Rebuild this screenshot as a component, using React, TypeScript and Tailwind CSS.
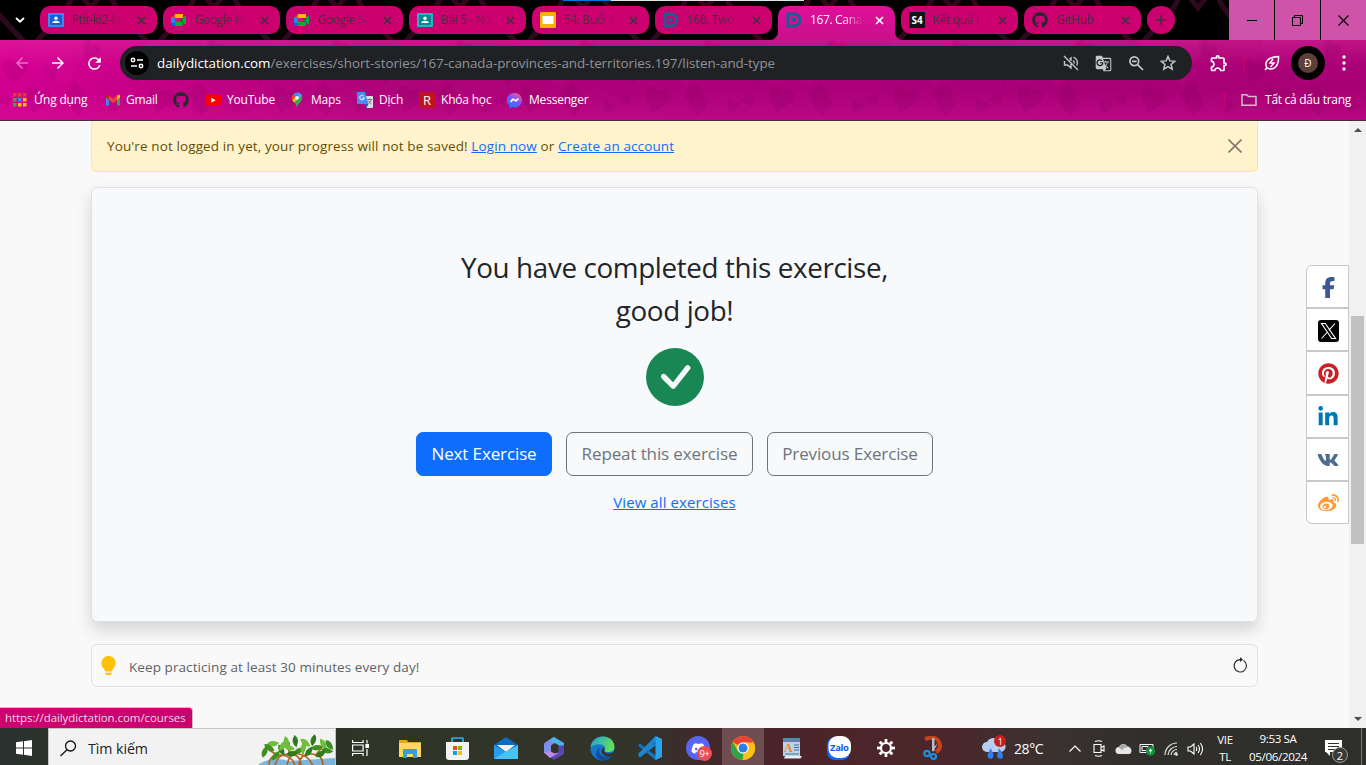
import React from "react";
import { FaGithub, FaFacebookF, FaPinterest, FaLinkedinIn, FaWeibo, FaDiscord } from "react-icons/fa6";
import { FaVk } from "react-icons/fa";
import { BsCheckCircleFill, BsLightbulbFill } from "react-icons/bs";
import { MdOutlineExtension, MdGTranslate, MdArrowBack, MdArrowForward, MdRefresh } from "react-icons/md";

const HEART = "M0 10 C-4 4 -12 -1 -12 -7 C-12 -14 -3 -15 0 -9 C3 -15 12 -14 12 -7 C12 -1 4 4 0 10 Z";

/* ---------- small drawings ---------- */

const CloseX = ({ className = "" }: { className?: string }) => (
  <svg width="9" height="9" viewBox="0 0 9 9" className={className}>
    <path d="M1 1l7 7M8 1L1 8" stroke="currentColor" strokeWidth="1.7" fill="none" />
  </svg>
);

const Classroom = ({ a, b }: { a: string; b: string }) => (
  <svg width="16" height="16" viewBox="0 0 16 16">
    <rect x="0" y="1" width="16" height="14" rx="1" fill={a} />
    <rect x="2" y="3" width="12" height="10" fill={b} />
    <circle cx="8" cy="6.3" r="1.7" fill="#fff" />
    <path d="M4.300 11c0-3 7.400-3 7.400 0z" fill="#fff" />
  </svg>
);

const Meet = () => (
  <svg width="16" height="16" viewBox="0 0 16 16">
    <path d="M4 2h8v4H4z" fill="#ffba00" />
    <path d="M4 2v4H0z" fill="#ea4335" />
    <path d="M0 6h4v5H0z" fill="#2684fc" />
    <path d="M0 11h4v3H1.200q-1.200 0-1.200-1.200z" fill="#0066da" />
    <path d="M4 10h8v2.800q0 1.200-1.200 1.200H4z" fill="#00ac47" />
    <path d="M9 8l3-2.500V12z" fill="#00832d" />
    <path d="M12 5.500L15 3v10l-3-2.500z" fill="#00ac47" />
    <path d="M4 6h5v4H4z" fill="#d8107a" />
  </svg>
);

const Slides = () => (
  <svg width="16" height="16" viewBox="0 0 16 16">
    <rect width="16" height="16" rx="1.500" fill="#f4b400" />
    <rect x="2.500" y="4" width="11" height="8" fill="#fff" />
  </svg>
);

const DLogo = () => (
  <svg width="16" height="16" viewBox="0 0 16 16">
    <path d="M2 2h6a6 6 0 010 12H2z" fill="none" stroke="#1d5c93" strokeWidth="3" />
    <path d="M6 6.500h2a1.500 1.500 0 010 3H6z" fill="#1d5c93" stroke="#1d5c93" />
  </svg>
);

const S4 = () => (
  <span className="flex h-4 w-4 items-center justify-center bg-[#101418] text-[10px] leading-none font-bold text-white">S4</span>
);

const Gmail = () => (
  <svg width="16" height="16" viewBox="0 0 16 16">
    <path d="M1 4v9.500h3V7.500z" fill="#4285f4" />
    <path d="M15 4v9.500h-3V7.500z" fill="#34a853" />
    <path d="M12 3.600l3-1.200V5.500l-3 2.500z" fill="#fbbc04" />
    <path d="M4 3.600L1 2.400V5.500l3 2.500z" fill="#c5221f" />
    <path d="M4 3.600L8 6.800l4-3.200V8l-4 3-4-3z" fill="#ea4335" />
  </svg>
);

const AppsGrid = () => (
  <svg width="14" height="14" viewBox="0 0 14 14">
    {["#e53935", "#e53935", "#e53935", "#43a047", "#4285f4", "#fbbc04", "#43a047", "#fbbc04", "#fbbc04"].map((c, i) => (
      <rect key={i} x={(i % 3) * 5} y={Math.floor(i / 3) * 5} width="3.500" height="3.500" fill={c} />
    ))}
  </svg>
);

const YouTube = () => (
  <svg width="16" height="16" viewBox="0 0 16 16">
    <rect x="0" y="2.500" width="16" height="11.500" rx="3" fill="#f00" />
    <path d="M6.300 5.800v5l4.300-2.500z" fill="#fff" />
  </svg>
);

const MapsPin = () => (
  <svg width="16" height="16" viewBox="0 0 16 16">
    <path d="M8 .5a5.300 5.300 0 015.300 5.300c0 3.700-4 5-5.300 9.700-.8-3-2-4-3.400-5.700l4-4.800z" fill="#34a853" />
    <path d="M4 2.500A5.300 5.300 0 018 .5c1 0 1.800.2 2.500.6L6.300 6z" fill="#4285f4" />
    <path d="M4 2.400L6.300 4.300 3.300 8.200A5.300 5.300 0 014 2.400z" fill="#ea4335" />
    <path d="M3.300 8.200L6.400 4.500 8 7.500l-3 3z" fill="#fbbc04" />
    <path d="M10.500 1.100a5.300 5.300 0 012.300 2.500L10 6.500 8 4z" fill="#4aa0f5" />
    <circle cx="8" cy="5.800" r="1.900" fill="#fff" />
  </svg>
);

const Translate = () => (
  <svg width="16" height="16" viewBox="0 0 16 16">
    <path d="M6 4h9q1 0 1 1v10q0 1-1 1H9.500z" fill="#dcdfe3" />
    <path d="M1 0h7l3.500 12H1q-1 0-1-1V1q0-1 1-1z" fill="#4a8af4" />
    <path d="M7.500 12h4L9.500 16z" fill="#2a56c6" />
    <path d="M7 4.300A2.300 2.300 0 107.300 6H5.200" stroke="#fff" fill="none" />
    <path d="M10.500 7.500h4.500M12.800 6.500v1M14.300 7.500q-.8 3-3 4M11.500 8.500q1 2.500 3 3.500" stroke="#5f6368" strokeWidth=".8" fill="none" />
  </svg>
);

const Messenger = () => (
  <svg width="15" height="15" viewBox="0 0 16 16">
    <defs>
      <linearGradient id="msg" x1="0.200" y1="1" x2="0.900" y2="0">
        <stop offset="0" stopColor="#0a84ff" />
        <stop offset=".55" stopColor="#8a4dff" />
        <stop offset="1" stopColor="#ff5f72" />
      </linearGradient>
    </defs>
    <path d="M8 0a7.600 7.600 0 018 7.700 7.600 7.600 0 01-10 7.300L3 16l-.3-2.500A7.600 7.600 0 018 0z" fill="url(#msg)" />
    <path d="M3.800 9.500L6.500 6.500l3 2 2.700-2.600" stroke="#fff" strokeWidth="1.800" fill="none" />
  </svg>
);

const Chrome = () => (
  <svg width="24" height="24" viewBox="0 0 24 24">
    <circle cx="12" cy="12" r="12" fill="#fbbc04" />
    <path d="M12 12L1.600 6A12 12 0 0122.400 6z" fill="#ea4335" />
    <path d="M1.600 6l5.300 9 5.500 2.700L11.500 24A12 12 0 011.600 6z" fill="#2fa24c" />
    <path d="M12 6.500h10.700a12 12 0 01-11 17.500L17 15z" fill="#fbc116" />
    <circle cx="12" cy="12" r="5.700" fill="#fff" />
    <circle cx="12" cy="12" r="4.500" fill="#2b7de9" />
  </svg>
);

/* ---------- browser header ---------- */

type TabInfo = { icon: React.ReactNode; title: string; active?: boolean };

const TABS: TabInfo[] = [
  { icon: <Classroom a="#4285f4" b="#1a5fd0" />, title: "Ptit-ki2-lo" },
  { icon: <Meet />, title: "Google M" },
  { icon: <Meet />, title: "Google M" },
  { icon: <Classroom a="#1fb5c4" b="#0b8794" />, title: "Bài 5 - Nộ" },
  { icon: <Slides />, title: "54. Buổi 5" },
  { icon: <DLogo />, title: "168. Two" },
  { icon: <DLogo />, title: "167. Cana", active: true },
  { icon: <S4 />, title: "Kết quả ti" },
  { icon: <FaGithub size={16} className="text-[#24292f]" />, title: "GitHub" },
];

const Tab = ({ icon, title, active }: TabInfo) => (
  <div
    className={
      active
        ? "relative mr-1.5 flex h-[34px] w-[117px] shrink-0 items-start rounded-t-[10px] bg-linear-to-b from-[#e0109b] to-[#c80f8a] pt-1.5 pl-2"
        : "relative mr-1.5 flex h-7 w-[117px] shrink-0 items-start rounded-[10px] bg-[#cd0070] pt-1.5 pl-2"
    }
  >
    {active && (
      <>
        <svg className="absolute bottom-0 -left-2" width="8" height="8"><path d="M8 0v8H0A8 8 0 008 0z" fill="#c80f8a" /></svg>
        <svg className="absolute -right-2 bottom-0" width="8" height="8"><path d="M0 0v8h8A8 8 0 010 0z" fill="#c80f8a" /></svg>
      </>
    )}
    <span className="h-4 w-4 shrink-0">{icon}</span>
    <span
      className={
        "ml-2 w-[55px] text-[12px] leading-4 tracking-[-0.350px] whitespace-nowrap " +
        (title === "GitHub" ? "" : "[mask-image:linear-gradient(to_right,black_60%,transparent_96%)] ") +
        (active ? "text-white" : "text-[#40323c]")
      }
    >
      {title}
    </span>
    <CloseX className={active ? "mt-[4px] ml-[10px] text-white" : "mt-[4px] ml-[10px] text-[#40323c]"} />
  </div>
);

const HeartOutlines = () => (
  <svg className="absolute inset-0" width="1366" height="40">
    <g fill="none" stroke="#2c0a1e" strokeWidth="1.500">
      {Array.from({ length: 11 }, (_, i) => (
        <g key={i}>
          <path d={HEART} transform={`translate(${91 + i * 123} -26) scale(3.400)`} />
          <path d={HEART} transform={`translate(${30 + i * 123} 14) scale(3.600)`} />
        </g>
      ))}
    </g>
  </svg>
);

const ToolbarHearts = () => (
  <svg className="absolute inset-0" width="1366" height="80">
    <g fill="#5a0048" fillOpacity=".1">
      {Array.from({ length: 12 }, (_, i) => {
        const x = i * 124;
        return (
          <g key={i}>
            <path d={HEART} transform={`translate(${x + 90} 12) rotate(20) scale(.8)`} />
            <path d={HEART} transform={`translate(${x + 52} 34) rotate(-15) scale(.6)`} />
            <path d={HEART} transform={`translate(${x + 14} 34) rotate(12) scale(1)`} />
            <path d={HEART} transform={`translate(${x + 6} 62) rotate(-20) scale(.5)`} />
            <path d={HEART} transform={`translate(${x + 36} 62) rotate(15) scale(1.100)`} />
            <path d={HEART} transform={`translate(${x + 75} 50) rotate(180) scale(.8)`} />
            <path d={HEART} transform={`translate(${x + 78} 68) scale(.8)`} />
            <path d={HEART} transform={`translate(${x + 112} 68) rotate(25) scale(.6)`} />
          </g>
        );
      })}
    </g>
    <g fill="#ff40c0" fillOpacity=".05">
      {Array.from({ length: 12 }, (_, i) => (
        <path key={i} d={HEART} transform={`translate(${60 + i * 124} 20) rotate(-15) scale(2.800)`} />
      ))}
    </g>
  </svg>
);

const BOOKMARKS: { icon: React.ReactNode; label: string; cls: string }[] = [
  { icon: <AppsGrid />, label: "Ứng dụng", cls: "w-[93px] gap-[7px] pl-[1px]" },
  { icon: <Gmail />, label: "Gmail", cls: "w-[68px] gap-[5px]" },
  { icon: <FaGithub size={16} className="text-[#24292f]" />, label: "", cls: "w-[32px]" },
  { icon: <YouTube />, label: "YouTube", cls: "w-[84px] gap-1.5" },
  { icon: <MapsPin />, label: "Maps", cls: "w-[68px] gap-1.5" },
  { icon: <Translate />, label: "Dịch", cls: "w-[62px] gap-1.5" },
  {
    icon: <span className="flex h-4 w-4 items-center justify-center bg-[#c1121f] text-[13px] leading-none text-white">R</span>,
    label: "Khóa học",
    cls: "w-[88px] gap-1.5",
  },
  { icon: <Messenger />, label: "Messenger", cls: "gap-[7px]" },
];

const Header = () => (
  <header className="w-full">
    <div className="relative flex h-10 bg-black">
      <HeartOutlines />
      <div className="absolute top-0 left-[563px] flex h-px w-[241px] bg-[#e3e3e3]"><div className="w-12 bg-[#0078d7]" /></div>
      <div className="relative flex h-10 w-10 shrink-0 items-center justify-center text-white">
        <svg width="10" height="6" viewBox="0 0 10 6"><path d="M1 1l4 3.700L9 1" stroke="currentColor" strokeWidth="1.900" fill="none" /></svg>
      </div>
      <div className="relative flex pt-1.5">
        {TABS.map((t, i) => <Tab key={i} {...t} />)}
        <div className="flex h-7 w-7 items-center justify-center rounded-full bg-[#cd0070]">
          <svg width="10" height="10"><path d="M5 0v10M0 5h10" stroke="#40323c" strokeWidth="1.700" /></svg>
        </div>
      </div>
      <div className="relative ml-auto flex h-10 w-[137px] gap-px bg-black">
        <div className="flex flex-1 items-center justify-center bg-[#cf53a8]"><svg width="10" height="1" className="bg-black" /></div>
        <div className="flex flex-1 items-center justify-center bg-[#cf53a8]">
          <svg width="11" height="11"><path d="M.5 2.500h8v8h-8zM2.500 2.500v-2h8v8h-2" fill="none" stroke="#000" /></svg>
        </div>
        <div className="flex flex-1 items-center justify-center bg-[#cf53a8]"><svg width="11" height="11"><path d="M.5.5l10 10M10.500.5l-10 10" stroke="#000" strokeWidth="1.100" /></svg></div>
      </div>
    </div>

    <div className="relative h-[81px] border-b border-[#40303c] bg-[linear-gradient(100deg,#d80094_0%,#c80088_12%,#b0037a_28%,#ad007a_60%,#a80074_100%)]">
      <div className="absolute inset-0 bg-[linear-gradient(to_bottom,rgba(230,50,160,.4)_0%,rgba(200,10,140,.1)_30%,rgba(160,0,110,.1)_62%,rgba(210,20,150,.4)_100%)]" />
      <ToolbarHearts />
      <div className="relative flex h-[46px] items-center">
        <MdArrowBack size={18} className="ml-[13px] text-[#e86fc0]" />
        <MdArrowForward size={18} className="ml-[18px] text-white" />
        <MdRefresh size={19} className="ml-[18px] text-white" />
        <div className="ml-4 flex h-[34px] w-[1072px] items-center rounded-full bg-[#202124] pr-4 pl-[5px]">
          <span className="flex h-6 w-6 items-center justify-center rounded-full bg-black">
            <svg width="14" height="12" viewBox="0 0 14 12" fill="none" stroke="#fff" strokeWidth="1.500">
              <circle cx="3" cy="3" r="1.700" /><path d="M7 3h6M1 9h6" /><circle cx="11" cy="9" r="1.700" />
            </svg>
          </span>
          <span className="ml-2 text-[13.400px] leading-5 tracking-[-0.040px] whitespace-nowrap text-[#8f9398]">
            <span className="text-white">dailydictation.com</span>/exercises/short-stories/167-canada-provinces-and-territories.197/listen-and-type
          </span>
          <div className="ml-auto flex items-center gap-4 text-[#c3c6ca]">
            <svg width="16" height="16" viewBox="0 0 16 16" fill="none" stroke="currentColor" strokeWidth="1.400">
              <path d="M1.500 6v4h3L8 13V9M8 6V3L6.500 4.300M10 5.500q1.500 1 1.300 3M10.500 2.200a6 6 0 013.300 8.300M1 1l14 14" />
            </svg>
            <MdGTranslate size={17} />
            <svg width="16" height="16" viewBox="0 0 16 16" fill="none" stroke="currentColor" strokeWidth="1.700">
              <circle cx="6.300" cy="6.300" r="4.400" /><path d="M9.600 9.600L15 15M4 6.300h4.600" />
            </svg>
            <svg width="16" height="16" viewBox="0 0 16 16" fill="none" stroke="currentColor" strokeWidth="1.500">
              <path d="M8 1.500l1.900 4.400 4.800.4-3.600 3.200 1.100 4.700L8 11.700l-4.200 2.500 1.100-4.700L1.300 6.300l4.800-.4z" />
            </svg>
          </div>
        </div>
        <MdOutlineExtension size={20} className="ml-[17px] text-white" />
        <div className="ml-[15px] h-4 w-px bg-[#cd0070]" />
        <svg width="16" height="16" viewBox="0 0 16 16" className="ml-[19px] text-white" fill="none" stroke="currentColor" strokeWidth="1.500">
          <path d="M1 15l2-2.200C0 8 3 2 14.500 1.500c.5 9-4.500 15-11.500 11.300M9 4L6 8h4l-3.500 4" />
        </svg>
        <span className="ml-[11px] flex h-[34px] w-[34px] items-center justify-center rounded-full bg-black">
          <span className="flex h-5 w-5 items-center justify-center rounded-full bg-[#5d4037] text-[10px] leading-none text-white">Đ</span>
        </span>
        <svg width="4" height="16" className="ml-[17px]"><g fill="#fff"><circle cx="2" cy="2" r="1.700" /><circle cx="2" cy="8" r="1.700" /><circle cx="2" cy="14" r="1.700" /></g></svg>
      </div>
      <div className="relative flex h-7 items-center pl-3 text-[12px] leading-4 tracking-[-0.200px] whitespace-nowrap text-white">
        {BOOKMARKS.map((b, i) => (
          <div key={i} className={"flex shrink-0 items-center " + b.cls}>{b.icon}{b.label && <span>{b.label}</span>}</div>
        ))}
        <div className="ml-auto flex items-center pr-[15px] tracking-[-0.280px]">
          <span className="mr-4 h-4 w-px bg-[#cd0070]" />
          <svg width="16" height="14" viewBox="0 0 16 14" fill="none" stroke="#c9c3c8" strokeWidth="1.500" className="mr-2">
            <path d="M1 12.200V1.800h4.800l1.600 1.700H15v8.700z" />
          </svg>
          Tất cả dấu trang
        </div>
      </div>
    </div>
  </header>
);

/* ---------- page ---------- */

const XBadge = () => (
  <svg width="21" height="22" viewBox="0 0 21 22">
    <rect width="21" height="22" rx="3" fill="#000" />
    <path d="M3.500 3.500h3.800l10.200 15h-3.800zM17 3.500l-6.200 6.800M9.500 12l-6 6.500" fill="none" stroke="#fff" strokeWidth="1.100" />
  </svg>
);

const SHARES = [
  <FaFacebookF size={21} className="text-[#3b5998]" />,
  <XBadge />,
  <FaPinterest size={21} className="text-[#cb2027]" />,
  <FaLinkedinIn size={22} className="text-[#0077b5]" />,
  <FaVk size={22} className="text-[#4c6c91]" />,
  <FaWeibo size={21} className="text-[#ff9933]" />,
];

const BTN = "flex h-11 items-center justify-center rounded-[7px] border text-[17px] tracking-[-0.120px] whitespace-nowrap ";

const Page = () => (
  <main className="flex h-[607px] bg-[#f9f9f9]">
    <div className="ml-[91px] flex w-[1167px] shrink-0 flex-col">
      <div className="flex h-[51px] items-center rounded-b-[6px] border border-t-0 border-[#ffe69c] bg-[#fff3cd] px-[15px] text-[13.500px] whitespace-nowrap text-[#664d03]">
        <span className="tracking-[0.110px]">
          You're not logged in yet, your progress will not be saved! <a className="text-[#0d6efd] underline">Login now</a> or <a className="text-[#0d6efd] underline">Create an account</a>
        </span>
        <svg width="14" height="14" className="ml-auto"><path d="M.5.5l13 13M13.500.5l-13 13" stroke="#80796a" strokeWidth="1.600" /></svg>
      </div>
      <section className="mt-[15px] flex h-[435px] flex-col items-center rounded-[6px] border border-[#dee2e6] bg-[#f8f9fb] pt-[58px] shadow-[0_8px_16px_rgba(0,0,0,0.15)]">
        <h1 className="text-center text-[27.800px] leading-[43px] tracking-[-0.360px] whitespace-nowrap text-[#212529]">
          You have completed this exercise,<br />good job!
        </h1>
        <BsCheckCircleFill size={58} className="mt-[16px] text-[#198754]" />
        <div className="mt-[26px] flex gap-[14px]">
          <button className={BTN + "w-[136px] border-[#0d6efd] bg-[#0d6efd] text-white"}>Next Exercise</button>
          <button className={BTN + "w-[187px] border-[#6c757d] text-[#6c757d]"}>Repeat this exercise</button>
          <button className={BTN + "w-[166px] border-[#6c757d] text-[#6c757d]"}>Previous Exercise</button>
        </div>
        <a className="mt-[14px] text-[15px] leading-6 tracking-[0.080px] text-[#0d6efd] underline">View all exercises</a>
      </section>
      <div className="mt-[22px] flex h-[43px] items-center rounded-[6px] border border-[#dee2e6] pr-[9px] pl-[7px] text-[13.500px] tracking-[0.080px] text-[#5d6267]">
        <BsLightbulbFill size={19} className="text-[#ffc107]" />
        <span className="ml-[11px] pt-[3px]">Keep practicing at least 30 minutes every day!</span>
        <svg width="16" height="17" viewBox="0 0 16 17" className="ml-auto" fill="none" stroke="#212529" strokeWidth="1.100">
          <path d="M11.500 3.500A6.200 6.200 0 118 2.600" /><path d="M8 .2l3 2.400-3 2.400z" fill="#212529" stroke="none" />
        </svg>
      </div>
    </div>
    <div className="mt-[144px] ml-auto flex h-[259px] w-[43px] flex-col overflow-hidden rounded-l-[6px] border border-[#c8c8c8] bg-white">
      {SHARES.map((s, i) => (
        <div key={i} className="flex flex-1 items-center justify-center border-b-2 border-[#c8c8c8] pt-[2px] pl-px last:border-b-0">{s}</div>
      ))}
    </div>
    <div className="flex w-[17px] shrink-0 flex-col items-center bg-[#f1f1f1]">
      <svg width="8" height="4" className="mt-[7px]"><path d="M0 4L4 0l4 4z" fill="#505050" /></svg>
      <div className="mt-[184px] h-[228px] w-[13px] bg-[#c1c1c1]" />
      <svg width="8" height="4" className="mt-auto mb-[7px]"><path d="M0 0l4 4 4-4z" fill="#505050" /></svg>
    </div>
  </main>
);

/* ---------- taskbar ---------- */

const LEAVES = [[6, 18], [14, 10], [22, 16], [17, 22], [30, 14], [36, 7], [40, 17], [46, 9], [54, 6], [58, 14], [64, 10], [50, 18], [68, 17], [27, 8], [62, 20], [10, 14], [44, 14], [33, 20], [70, 11], [24, 12]];

const Mangrove = () => (
  <svg width="76" height="32" viewBox="0 0 76 32">
    <path d="M0 30q14-8 30-3l46-3v8H0z" fill="#7db4dc" />
    <path d="M10 32Q10 20 22 21t14 11M16 32q2-12 14-12t12 12M28 32Q30 18 40 20t14 12M40 32q0-12 12-12t12 12M20 22L10 16M30 20V8M44 20V8M56 22l8-10" fill="none" stroke="#b5621d" strokeWidth="1.700" />
    {LEAVES.map(([x, y], i) => (
      <path key={i} d="M-6 1Q-3-5 6-2Q2 5-6 1z" transform={`translate(${x} ${y}) rotate(${((i * 67) % 180) - 60})`} fill={["#3f8f22", "#6fbf3c", "#2f7a1c"][i % 3]} />
    ))}
  </svg>
);

const Folder = () => (
  <svg width="22" height="19" viewBox="0 0 22 19">
    <path d="M0 1h8l1 2h13v15H0z" fill="#e8a317" /><path d="M0 4h22v14H0z" fill="#ffd766" />
    <path d="M4 19v-8q0-1 1-1h12q1 0 1 1v8h-4v-4H8v4z" fill="#3b9be0" />
  </svg>
);
const Store = () => (
  <svg width="23" height="23" viewBox="0 0 23 23">
    <path d="M6 6V1.800q0-.8.800-.8h9.400q.8 0 .8.800V6" fill="none" stroke="#29b6ea" strokeWidth="1.700" />
    <path d="M0 5h23v15q0 3-3 3H3q-3 0-3-3z" fill="#f3f3f3" />
    <path d="M7 9h4v4H7z" fill="#f25022" /><path d="M12 9h4v4h-4z" fill="#7fba00" /><path d="M7 14h4v4H7z" fill="#00a4ef" /><path d="M12 14h4v4h-4z" fill="#ffb900" />
  </svg>
);
const Mail = () => (
  <svg width="24" height="22" viewBox="0 0 24 22">
    <path d="M0 8l12-8 12 8v14H0z" fill="#0f6cbd" /><path d="M3 8h18l-9 7z" fill="#f2f2f2" />
    <path d="M0 8l24 14H0z" fill="#2a9be8" /><path d="M24 8v14H0l12-7.500z" fill="#45c3f5" />
  </svg>
);
const M365 = () => (
  <svg width="20" height="23" viewBox="0 0 20 23">
    <path d="M10 0L4 3.500 0 6.500V16l4 2 3-2V8.500L12 5z" fill="#7d8fe6" />
    <path d="M10 0l10 6v9l-5-3.500V8.500L9 5l-3-2.500z" fill="#48b5ee" />
    <path d="M20 8v9l-10 6-4-3 8.500-5V9z" fill="#5b46b5" />
    <path d="M0 15.500l6-1.500 4.500 2.500 5-1L6 21z" fill="#b98be6" />
    <path d="M7 9l3.500-2.200L14 9v4.500l-3.500 2L7 13.500z" fill="#31342a" />
  </svg>
);
const Edge = () => (
  <svg width="25" height="25" viewBox="0 0 25 25">
    <defs><linearGradient id="edg" x1="0" y1="0" x2="1" y2=".4"><stop offset="0" stopColor="#1f9de0" /><stop offset="1" stopColor="#5fe05a" /></linearGradient></defs>
    <circle cx="12.500" cy="12.500" r="12" fill="#1577c9" />
    <path d="M.6 11.500C2-3 24-3 24.500 11c0 4-4 5.500-7.500 5-2.500-.4-3-1.500-2-2.500 2-5-8-8-14.400-2z" fill="url(#edg)" />
    <path d="M10 11c-3 5 1 12 11 9-2 3-5 4.500-9 4.500-7-1-8-9-2-13.500z" fill="#0d4f9e" />
    <path d="M14.500 13.500c-1 2 1 4 4.500 4 3 0 5.500-2 6-3.500l-2.500 6c-5 2-11-1-11-5 0-1.500 1-3 2-3.500z" fill="#313427" />
  </svg>
);
const VSCode = () => (
  <svg width="24" height="24" viewBox="0 0 24 24">
    <path d="M17.500 7L0 19.500 2 21.500 17.500 9.500z" fill="#1686cf" />
    <path d="M0 9.500l2-2L19 20.500V24h-1.500z" fill="#1177bd" />
    <path d="M0 18l17.500-18L19 5 3 20.500z" fill="#1a86cf" />
    <path d="M17.500 0L24 3v18l-6.500 3z" fill="#2aa3ef" />
  </svg>
);
const Discord = () => (
  <div className="relative flex h-6 w-6 items-center justify-center rounded-full bg-[#5865f2] text-white">
    <FaDiscord size={15} />
    <span className="absolute top-[10px] left-[11px] flex h-[15px] w-[15px] items-center justify-center rounded-full bg-[#ee4b50] text-[9.500px] leading-none tracking-tighter">9+</span>
  </div>
);
const WordPad = () => (
  <svg width="20" height="22" viewBox="0 0 20 22">
    <path d="M1 1h17v18H1z" fill="#b9d4ea" /><path d="M1 1h17v4H1z" fill="#5b87ad" /><path d="M3 19h17l-1.500 2.500H2z" fill="#e8eef3" />
    <text x="2" y="15" fontSize="12" fontWeight="bold" fontFamily="Liberation Serif, serif" fill="#f08020">A</text>
    <path d="M12 8h5M12 10.500h5M12 13h5M3 17h14" stroke="#47708f" />
  </svg>
);
const Zalo = () => (
  <svg width="24" height="24" viewBox="0 0 24 24">
    <rect x="0" y="1" width="23" height="23" rx="8" fill="#0a68ff" />
    <rect x="1.500" y="0" width="22.500" height="22" rx="9" fill="#fff" />
    <text x="12.500" y="14.500" fontSize="9.500" fontWeight="bold" textAnchor="middle" textLength="19" fill="#0a5be0">Zalo</text>
  </svg>
);
const Gear = () => (
  <svg width="18" height="18" viewBox="0 0 18 18" fill="none" stroke="#fff">
    <circle cx="9" cy="9" r="5" strokeWidth="2.200" />
    {[0, 45, 90, 135, 180, 225, 270, 315].map((a) => <path key={a} d="M9 3.500V0" strokeWidth="2.800" transform={`rotate(${a} 9 9)`} />)}
  </svg>
);
const Snip = () => (
  <svg width="20" height="24" viewBox="0 0 20 24">
    <path d="M2 3q11-3.500 14 3t-3 10" fill="none" stroke="#c8401c" strokeWidth="4" />
    <path d="M9 2h2.500v13H9zM15 7l-5 9-1-3z" fill="#b8bcc2" />
    <circle cx="4" cy="17.500" r="2.700" fill="none" stroke="#1c8fe0" strokeWidth="2.200" /><circle cx="10.500" cy="20.500" r="2.500" fill="none" stroke="#1c8fe0" strokeWidth="2.200" />
  </svg>
);
const Weather = () => (
  <div className="relative h-6 w-6">
    <svg width="24" height="24" viewBox="0 0 24 24">
      <path d="M5 16a5 5 0 010-10 7 7 0 0112-1 5.500 5.500 0 012 11z" fill="#b9cdf0" />
      <path d="M8.500 12q5 8 1.500 10.500-4 1-4.500-3zM17 12q6 8 3 10.500-4.500 1-5-3z" fill="#2f80ed" />
    </svg>
    <span className="absolute top-[-1px] left-[12px] flex h-3 w-3 items-center justify-center rounded-full bg-[#c4201f] text-[9px] leading-none text-white">1</span>
  </div>
);

const APPS: [React.ReactNode, string][] = [
  [<Folder />, "w-12"], [<Store />, "w-[47px]"], [<Mail />, "w-[49px]"], [<M365 />, "w-12"], [<Edge />, "w-12"], [<VSCode />, "w-12"], [<Discord />, "w-12"],
  [<Chrome />, "w-[42px] bg-[#6e4e50] mr-1"],
  [<WordPad />, "w-12"], [<Zalo />, "w-[46px]"], [<Gear />, "w-[47px]"], [<Snip />, "w-[47px]"],
];

const TRAY: React.ReactNode[] = [
  <svg width="12" height="7" fill="none" stroke="#fff" strokeWidth="1.200"><path d="M.5 6.500L6 1l5.500 5.500" /></svg>,
  <svg width="12" height="17" fill="none" stroke="#fff" strokeWidth="1.100"><path d="M2 1.500q4-1.500 7 0M2 15.500q4 1.500 7 0M1 4.500h7v8H1zM8 7.500l3-1.500v5l-3-1.500" /></svg>,
  <svg width="17" height="12"><path d="M4 11a3.500 3.500 0 010-7 4.500 4.500 0 018-1q4 1 4.500 4.500 0 3.500-3 3.500z" fill="#e6e6e6" /><path d="M4 4.500a4.500 4.500 0 018-1.500q1 .3 1.500 1-4 0-6.500 3Z" fill="#a8a8a8" /></svg>,
  <svg width="17" height="14"><path d="M1 2.500h13v8H1zM3 4.500h6v4H3z" fill="none" stroke="#fff" /><circle cx="11.500" cy="9" r="4.700" fill="#16913a" /><path d="M11.500 6.500v5M10 9l1.500-2L13 9z" fill="#fff" stroke="#fff" strokeWidth=".6" /></svg>,
  <svg width="14" height="14" fill="none" stroke="#ddd" strokeWidth="1.200"><path d="M1 13A12 12 0 0113 1M4 13a9 9 0 019-8.500M7 13a6 6 0 016-5.500M10 13q.5-2.500 3-2.700" /><circle cx="12.500" cy="12.500" r=".8" fill="#fff" /></svg>,
  <svg width="17" height="14" fill="none" stroke="#fff" strokeWidth="1.100"><path d="M1 5v4h2.500L7 12V2L3.500 5zM9 5q1.500 2 0 4M11 3q3 4 0 8M13.300 1q4.500 6 0 12" /></svg>,
];

const Taskbar = () => (
  <footer className="flex h-[37px] items-stretch overflow-hidden bg-[linear-gradient(to_right,#2a322f_0px,#2f3526_340px,#33332a_640px,#45262a_730px,#4d2429_800px,#4a272a_950px,#3a3230_1050px,#302f2b_1150px,#2e2e2a_1366px)] text-white">
    <div className="flex w-12 items-center justify-center pt-[3px]">
      <svg width="16" height="16"><path d="M0 2.300L7 1.300V7.500H0zM8 1.200L16 0v7.500H8zM0 8.500h7v6.200l-7-1zM8 8.500h8V16l-8-1.200z" fill="#fff" /></svg>
    </div>
    <div className="flex w-[288px] border border-b-0 border-[#c4c4c4] bg-[#f2f2f2] pl-[11px]">
      <svg width="17" height="17" className="mt-[11px]" fill="none" stroke="#111" strokeWidth="1.300"><circle cx="10.500" cy="6" r="5" /><path d="M7 9.700L.5 16" /></svg>
      <span className="mt-[10px] ml-[11px] text-[14.200px] leading-5 tracking-[-0.050px] text-[#222]">Tìm kiếm</span>
      <div className="mt-[5px] ml-auto"><Mangrove /></div>
    </div>
    <div className="flex w-[50px] items-center justify-center pt-[3px] pr-0.5">
      <svg width="17" height="16" fill="none" stroke="#fff" strokeWidth="1.200"><path d="M.6 0v2.500h10.500V0M.6 5h10.500v6H.6zM.6 16v-2.500h10.500V16M15 0v3.500M15 9v7" /><path d="M14 4.500h2.500v3H14z" fill="#fff" /></svg>
    </div>
    {APPS.map(([icon, cls], i) => <div key={i} className={"flex shrink-0 items-center justify-center pt-[3px] " + cls}>{icon}</div>)}
    <div className="flex w-[106px] shrink-0 items-center pt-[3px] pl-[26px] text-[14px] tracking-[-0.400px]"><Weather /><span className="ml-2">28°C</span></div>
    <div className="ml-[1px] flex shrink-0 pt-[4px]">
      {TRAY.map((icon, i) => <div key={i} className="flex w-6 items-center justify-center">{icon}</div>)}
    </div>
    <div className="ml-[2px] flex w-8 shrink-0 flex-col items-center pt-[3px] text-[11.500px] leading-[17px] tracking-[-0.300px]"><span>VIE</span><span>TL</span></div>
    <div className="ml-[6px] flex w-[62px] shrink-0 flex-col items-center pt-[2px] text-[11.600px] leading-[18px] tracking-[-0.350px] whitespace-nowrap"><span>9:53 SA</span><span>05/06/2024</span></div>
    <div className="relative ml-[16px] w-7 shrink-0 pt-3">
      <svg width="17" height="16"><path d="M0 0h17v12H5v4l-4-4H0z" fill="#fff" /><path d="M3 3.500h11M3 6.500h11M3 9.500h7" stroke="#2e2e2a" /></svg>
      <span className="absolute top-[19px] left-[7px] flex h-4 w-4 items-center justify-center rounded-full border border-[#999] bg-[#3a3a36] text-[11px] leading-none">2</span>
    </div>
    <div className="ml-auto w-[5px] border-l border-[#777]" />
  </footer>
);

export default function App() {
  return (
    <div className="relative h-[765px] w-[1366px] overflow-hidden bg-[#f9f9f9] font-['Open_Sans','Noto_Sans',sans-serif]">
      <Header />
      <Page />
      <Taskbar />
      <div className="absolute top-[707px] left-0 flex h-[21px] w-[193px] items-center rounded-tr-[4px] border-t border-r border-[#d8b8cc] bg-[#cd0070] pl-[5px] text-[11.500px] tracking-[-0.070px] whitespace-nowrap text-[#f3dbe8]">
        https://dailydictation.com/courses
      </div>
    </div>
  );
}
